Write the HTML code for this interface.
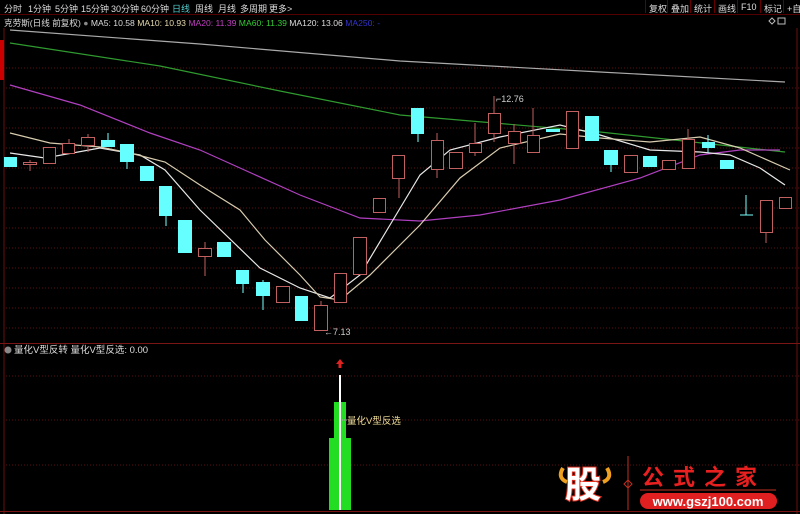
<!DOCTYPE html>
<html><head><meta charset="utf-8">
<style>
body{margin:0;background:#000;width:800px;height:514px;overflow:hidden;font-family:"Liberation Sans","Noto Sans CJK SC",sans-serif;}
.top{position:absolute;left:0;top:0;width:800px;height:14px;font-size:9px;color:#ddd;white-space:nowrap}
.top span{position:absolute;top:2px}
.btn{position:absolute;top:0;height:13px;border-left:1px solid #600;font-size:9px;color:#ddd;padding:2px 3px 0;box-sizing:border-box}
.l2{position:absolute;left:4px;top:17px;font-size:8.6px;white-space:nowrap;color:#ddd}
</style></head><body>
<svg width="800" height="514" style="position:absolute;left:0;top:0">
<g stroke="#5a1010" stroke-dasharray="1,2" stroke-width="1">
<line x1="6" y1="68" x2="800" y2="68"/><line x1="6" y1="88" x2="800" y2="88"/><line x1="6" y1="108" x2="800" y2="108"/><line x1="6" y1="128" x2="800" y2="128"/><line x1="6" y1="148" x2="800" y2="148"/><line x1="6" y1="168" x2="800" y2="168"/><line x1="6" y1="188" x2="800" y2="188"/><line x1="6" y1="208" x2="800" y2="208"/><line x1="6" y1="228" x2="800" y2="228"/><line x1="6" y1="248" x2="800" y2="248"/><line x1="6" y1="268" x2="800" y2="268"/><line x1="6" y1="288" x2="800" y2="288"/><line x1="6" y1="308" x2="800" y2="308"/><line x1="6" y1="328" x2="800" y2="328"/>
<line x1="6" y1="376" x2="800" y2="376"/><line x1="6" y1="420" x2="800" y2="420"/><line x1="6" y1="465" x2="800" y2="465"/>
</g>
<line x1="4" y1="28" x2="4" y2="514" stroke="#6a1010"/>
<line x1="797" y1="28" x2="797" y2="514" stroke="#6a1010"/>
<rect x="0" y="40" width="4" height="40" fill="#c00"/>
<line x1="0" y1="14.5" x2="800" y2="14.5" stroke="#500"/>
<line x1="0" y1="343.5" x2="800" y2="343.5" stroke="#7a1515"/>
<line x1="0" y1="511.5" x2="800" y2="511.5" stroke="#7a1515"/>
<g fill="none" stroke-width="1.2">
<polyline stroke="#aaa" points="10,30 200,44 400,61 600,72 785,82"/>
<polyline stroke="#2f9a2f" points="10,43 160,66 280,91 400,115 600,132 785,152"/>
<polyline stroke="#b040c0" points="10,85 80,105 150,133 200,150 300,195 360,218 420,221 480,215 560,200 640,178 700,155 740,150 780,150"/>
<polyline stroke="#e8e8e8" points="10,153 45,158 100,148 140,155 165,170 200,210 260,268 300,288 330,298 360,275 390,225 420,175 450,150 500,137 560,125 600,135 650,150 700,152 730,155 760,168 785,185"/>
<polyline stroke="#d8ccb0" points="10,133 50,143 100,147 130,153 165,162 200,185 240,210 265,240 300,275 320,297 340,300 370,275 420,225 460,178 500,148 560,134 600,138 650,142 700,137 740,148 790,170"/>
</g>
<g id="c">
<g stroke="#c06060" stroke-width="1">
<line x1="30" y1="160" x2="30" y2="171"/><line x1="69" y1="139" x2="69" y2="153"/><line x1="88" y1="134" x2="88" y2="152"/><line x1="205" y1="242" x2="205" y2="276"/><line x1="321" y1="301" x2="321" y2="330"/><line x1="399" y1="178" x2="399" y2="198"/><line x1="437" y1="133" x2="437" y2="178"/><line x1="475" y1="123" x2="475" y2="156"/><line x1="494" y1="96" x2="494" y2="142"/><line x1="514" y1="124" x2="514" y2="164"/><line x1="533" y1="108" x2="533" y2="152"/><line x1="688" y1="129" x2="688" y2="168"/><line x1="766" y1="200" x2="766" y2="243"/>
</g>
<g stroke="#7ff" stroke-width="1">
<line x1="108" y1="133" x2="108" y2="147"/><line x1="127" y1="144" x2="127" y2="169"/><line x1="166" y1="186" x2="166" y2="226"/><line x1="243" y1="270" x2="243" y2="293"/><line x1="263" y1="280" x2="263" y2="310"/><line x1="418" y1="108" x2="418" y2="142"/><line x1="611" y1="150" x2="611" y2="172"/><line x1="708" y1="135" x2="708" y2="153"/><line x1="746" y1="195" x2="746" y2="215"/><line x1="740" y1="215" x2="753" y2="215"/>
</g>
<g fill="#000" stroke="#c06060" stroke-width="1">
<rect x="23.5" y="162.5" width="13" height="2"/><rect x="43.5" y="147.5" width="12" height="16"/><rect x="62.5" y="143.5" width="12" height="10"/><rect x="81.5" y="137.5" width="13" height="8"/><rect x="198.5" y="248.5" width="13" height="8"/><rect x="276.5" y="286.5" width="13" height="16"/><rect x="314.5" y="305.5" width="13" height="25"/><rect x="334.5" y="273.5" width="12" height="29"/><rect x="353.5" y="237.5" width="13" height="37"/><rect x="373.5" y="198.5" width="12" height="14"/><rect x="392.5" y="155.5" width="12" height="23"/><rect x="431.5" y="140.5" width="12" height="29"/><rect x="449.5" y="152.5" width="13" height="16"/><rect x="469.5" y="143.5" width="12" height="9"/><rect x="488.5" y="113.5" width="12" height="20"/><rect x="508.5" y="131.5" width="12" height="12"/><rect x="527.5" y="135.5" width="12" height="17"/><rect x="566.5" y="111.5" width="12" height="37"/><rect x="624.5" y="155.5" width="13" height="17"/><rect x="662.5" y="160.5" width="13" height="9"/><rect x="682.5" y="139.5" width="12" height="29"/><rect x="760.5" y="200.5" width="12" height="32"/><rect x="779.5" y="197.5" width="12" height="11"/>
</g>
<g fill="#6ff">
<rect x="4" y="157" width="13" height="10"/><rect x="101" y="140" width="14" height="7"/><rect x="120" y="144" width="14" height="18"/><rect x="140" y="166" width="14" height="15"/><rect x="159" y="186" width="13" height="30"/><rect x="178" y="220" width="14" height="33"/><rect x="217" y="242" width="14" height="15"/><rect x="236" y="270" width="13" height="14"/><rect x="256" y="282" width="14" height="14"/><rect x="295" y="296" width="13" height="25"/><rect x="411" y="108" width="13" height="26"/><rect x="546" y="129" width="14" height="3"/><rect x="585" y="116" width="14" height="25"/><rect x="604" y="150" width="14" height="15"/><rect x="643" y="156" width="14" height="11"/><rect x="702" y="142" width="13" height="6"/><rect x="720" y="160" width="14" height="9"/>
</g>
</g>
<text x="324" y="335" fill="#ccc" font-size="9" font-family="Liberation Sans">←7.13</text>
<text x="496" y="102" fill="#ccc" font-size="9" font-family="Liberation Sans">⌐12.76</text>
<rect x="329" y="438" width="22" height="72" fill="#22dd22"/>
<rect x="334" y="402" width="12" height="108" fill="#22dd22"/>
<line x1="340" y1="375" x2="340" y2="510" stroke="#fff" stroke-width="2"/>
<path d="M340 359 L336 364 H338.5 V368 H341.5 V364 H344 Z" fill="#d22"/>
<line x1="342" y1="420" x2="348" y2="420" stroke="#aaa" stroke-dasharray="1,1"/>
<text x="347" y="424" fill="#eedd99" font-size="9.5" font-family="Liberation Sans,Noto Sans CJK SC,sans-serif">量化V型反选</text>
<circle cx="8" cy="350" r="3.5" fill="#888"/>
<text x="14" y="353" fill="#ddd" font-size="9.5" font-family="Liberation Sans,Noto Sans CJK SC,sans-serif">量化V型反转  量化V型反选: 0.00</text>
<text x="565" y="497" fill="#fff" stroke="#e03020" stroke-width="2" font-size="36" font-weight="bold" font-family="Noto Sans CJK SC,sans-serif" paint-order="stroke">股</text>
<path d="M563 468 q-6 10 4 14 M607 468 q6 10 -4 14" stroke="#f0a020" stroke-width="4" fill="none"/>
<line x1="628" y1="456" x2="628" y2="510" stroke="#c03020"/>
<path d="M628 480 l4 4 -4 4 -4 -4z" fill="none" stroke="#c03020"/>
<text x="642" y="485" fill="#e82020" font-size="22" font-weight="bold" letter-spacing="9" font-family="Noto Sans CJK SC,sans-serif">公式之家</text>
<line x1="640" y1="490" x2="776" y2="490" stroke="#c03020"/>
<rect x="640" y="493" width="137" height="16" rx="8" fill="#e02020"/>
<text x="708" y="506" fill="#fff" font-size="13" font-weight="bold" text-anchor="middle" font-family="Liberation Sans">www.gszj100.com</text>
<g stroke="#bbb" fill="none"><path d="M769 21 l3 -3 3 3 -3 3z"/><rect x="778" y="18" width="7" height="6"/></g>
</svg>
<div class="top">
<span style="left:4px">分时</span><span style="left:28px">1分钟</span><span style="left:55px">5分钟</span><span style="left:81px">15分钟</span><span style="left:111px">30分钟</span><span style="left:141px">60分钟</span><span style="left:172px;color:#5cc">日线</span><span style="left:195px">周线</span><span style="left:218px">月线</span><span style="left:240px">多周期</span><span style="left:269px">更多&gt;</span>
</div>
<div class="btn" style="left:645px">复权</div><div class="btn" style="left:667px">叠加</div><div class="btn" style="left:690px">统计</div><div class="btn" style="left:714px">画线</div><div class="btn" style="left:737px">F10</div><div class="btn" style="left:760px">标记</div><div class="btn" style="left:783px">+自</div>
<div class="l2">克劳斯(日线 前复权) <span style="color:#888">●</span> MA5: 10.58 <span style="color:#e8dcb0">MA10: 10.93</span> <span style="color:#c040c0">MA20: 11.39</span> <span style="color:#3c3">MA60: 11.39</span> MA120: 13.06 <span style="color:#33c">MA250: -</span></div>
</body></html>
